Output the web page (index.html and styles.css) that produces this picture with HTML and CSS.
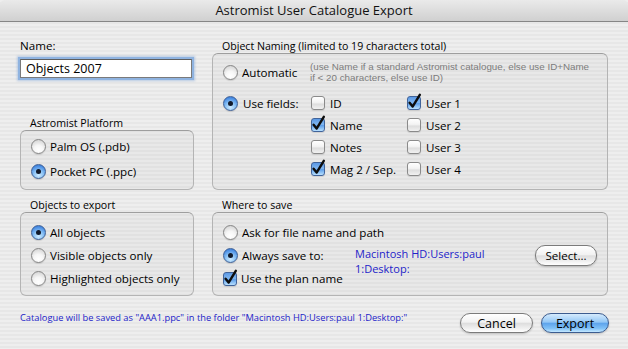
FILE: index.html
```html
<!DOCTYPE html>
<html lang="en">
<head>
    <meta charset="UTF-8">
    <title>Astromist User Catalogue Export</title>
    <link rel="stylesheet" href="styles.css">
</head>
<body>
    <div class="window">
        <div class="titlebar">Astromist User Catalogue Export</div>

        <div class="content">
            <div class="top-left">
                <div class="field-label">Name:</div>
                <input class="name-input" type="text" value="Objects 2007">

                <div class="group platform">
                    <div class="group-title">Astromist Platform</div>
                    <div class="group-box">
                        <div class="option"><span class="radio"></span>Palm OS (.pdb)</div>
                        <div class="option"><span class="radio on"></span>Pocket PC (.ppc)</div>
                    </div>
                </div>
            </div>

            <div class="group naming">
                <div class="group-title">Object Naming (limited to 19 characters total)</div>
                <div class="group-box">
                    <div class="auto-row">
                        <div class="option lead"><span class="radio"></span>Automatic</div>
                        <div class="note">
                            <div>(use Name if a standard Astromist catalogue, else use ID+Name</div>
                            <div>if &lt; 20 characters, else use ID)</div>
                        </div>
                    </div>
                    <div class="fields">
                        <div class="option"><span class="radio on"></span>Use fields:</div>
                        <div class="option"><span class="check"></span>ID</div>
                        <div class="option"><span class="check on"><svg width="14" height="14" viewBox="0 0 14 14"><path d="M2.6 6.8 L5.6 10.6 L12.8 -1.2"/></svg></span>User 1</div>

                        <div></div>
                        <div class="option"><span class="check on"><svg width="14" height="14" viewBox="0 0 14 14"><path d="M2.6 6.8 L5.6 10.6 L12.8 -1.2"/></svg></span>Name</div>
                        <div class="option"><span class="check"></span>User 2</div>

                        <div></div>
                        <div class="option"><span class="check"></span>Notes</div>
                        <div class="option"><span class="check"></span>User 3</div>

                        <div></div>
                        <div class="option"><span class="check on"><svg width="14" height="14" viewBox="0 0 14 14"><path d="M2.6 6.8 L5.6 10.6 L12.8 -1.2"/></svg></span>Mag 2 / Sep.</div>
                        <div class="option"><span class="check"></span>User 4</div>
                    </div>
                </div>
            </div>

            <div class="group objects">
                <div class="group-title">Objects to export</div>
                <div class="group-box">
                    <div class="option"><span class="radio on"></span>All objects</div>
                    <div class="option"><span class="radio"></span>Visible objects only</div>
                    <div class="option"><span class="radio"></span>Highlighted objects only</div>
                </div>
            </div>

            <div class="group where">
                <div class="group-title">Where to save</div>
                <div class="group-box">
                    <div class="option wide"><span class="radio"></span>Ask for file name and path</div>
                    <div class="option"><span class="radio on"></span>Always save to:</div>
                    <div class="path">Macintosh HD:Users:paul<br>1:Desktop:</div>
                    <button class="btn small">Select...</button>
                    <div class="option"><span class="check on"><svg width="14" height="14" viewBox="0 0 14 14"><path d="M2.6 6.8 L5.6 10.6 L12.8 -1.2"/></svg></span>Use the plan name</div>
                </div>
            </div>
        </div>

        <div class="footer">
            <div class="status">Catalogue will be saved as "AAA1.ppc" in the folder "Macintosh HD:Users:paul 1:Desktop:"</div>
            <div class="buttons">
                <button class="btn cancel">Cancel</button>
                <button class="btn default">Export</button>
            </div>
        </div>
    </div>
</body>
</html>
```

FILE: styles.css
```css
* {
    box-sizing: border-box;
}

body {
    margin: 0;
    width: 628px;
    height: 349px;
    overflow: hidden;
    font-family: "Open Sans", "DejaVu Sans", sans-serif;
    font-size: 11.6px;
    color: #000;
    background: #e8e8e8;
}

.window {
    height: 349px;
    background: repeating-linear-gradient(to bottom, #eeeeee 0, #eeeeee 2px, #e7e7e7 2px, #e7e7e7 4px);
}

.titlebar {
    height: 22px;
    line-height: 21px;
    text-align: center;
    font-size: 13px;
    color: #111;
    background: linear-gradient(#eaeaea, #d0d0d0);
    border-bottom: 1px solid #868686;
    border-radius: 5px 5px 0 0;
}

.content {
    display: grid;
    grid-template-columns: 174px 396px;
    column-gap: 18px;
    row-gap: 9px;
    align-items: end;
    padding: 16px 20px 0;
}

.field-label {
    line-height: 15px;
}

.name-input {
    display: block;
    width: 172px;
    height: 19px;
    margin-top: 6px;
    padding: 0 5px;
    font-family: inherit;
    font-size: 12.5px;
    color: #000;
    background: #fff;
    border: 1px solid #7a7a7a;
    border-top-color: #5e5e5e;
    border-radius: 0;
    outline: none;
    box-shadow: 0 0 0 2px #8fb3e0, 0 0 2px 3px rgba(120, 160, 215, 0.45);
}

.platform {
    margin-top: 39px;
}

.group-title {
    height: 13px;
    line-height: 13px;
    padding-left: 10px;
    font-size: 10.6px;
}

.group-box {
    border: 1px solid #b4b4b4;
    border-top-color: #9e9e9e;
    border-radius: 6px;
    background: rgba(0, 0, 0, 0.025);
    padding: 8px 10px 0;
}

.platform .group-box {
    height: 60px;
    padding-top: 4px;
    display: grid;
    grid-auto-rows: 23px;
    row-gap: 2px;
}

.naming .group-box {
    height: 137px;
    padding-top: 7px;
}

.objects .group-box {
    height: 84px;
    display: grid;
    grid-auto-rows: 23px;
}

.where .group-box {
    height: 84px;
    display: grid;
    grid-template-columns: 132px 1fr auto;
    grid-auto-rows: 23px;
    align-items: center;
}

.option {
    display: flex;
    align-items: center;
    gap: 4px;
    white-space: nowrap;
}

.option.wide {
    grid-column: 1 / 4;
}

.auto-row {
    display: flex;
    align-items: center;
    height: 22px;
}

.option.lead {
    width: 87px;
    flex: none;
}

.note {
    font-family: "Liberation Sans", sans-serif;
    font-size: 9.8px;
    line-height: 11.3px;
    color: #7c7c7c;
    white-space: nowrap;
}

.fields {
    margin-top: 9px;
    display: grid;
    grid-template-columns: 88px 96px 1fr;
    grid-auto-rows: 22px;
    align-items: center;
}

.fields .option {
    gap: 5px;
}

.path {
    grid-row: 2 / 4;
    grid-column: 2;
    align-self: start;
    padding-top: 3px;
    font-size: 11px;
    line-height: 14.5px;
    color: #2323c8;
}

.radio {
    flex: none;
    width: 15px;
    height: 15px;
    border-radius: 50%;
    border: 1px solid #858585;
    background: radial-gradient(circle at 50% 78%, #ffffff 0, #f6f6f6 40%, #d9d9d9 80%, #c4c4c4 100%);
    box-shadow: 0 1px 1px rgba(0, 0, 0, 0.12);
    position: relative;
}

.radio.on {
    border-color: #3d5f95;
    background: radial-gradient(circle at 50% 80%, #cdeaff 0, #8cc3f5 40%, #4a8ee4 75%, #2d6acb 100%);
}

.radio.on::after {
    content: "";
    position: absolute;
    left: 4px;
    top: 4px;
    width: 5px;
    height: 5px;
    border-radius: 50%;
    background: #111a2c;
}

.check {
    flex: none;
    width: 14px;
    height: 14px;
    border-radius: 3px;
    border: 1px solid #8a8a8a;
    background: linear-gradient(#ffffff, #f3f3f3 45%, #dedede 60%, #f1f1f1);
    box-shadow: 0 1px 1px rgba(0, 0, 0, 0.1);
    position: relative;
}

.check.on {
    border-color: #40639a;
    background: linear-gradient(#5b98e4, #7fb6f0 45%, #5d9ee9 55%, #b9e1ff);
}

.check svg {
    position: absolute;
    left: -1px;
    top: -1px;
    overflow: visible;
}

.check path {
    fill: none;
    stroke: #0d0d0d;
    stroke-width: 2.4;
    stroke-linejoin: round;
    stroke-linecap: round;
}

.btn {
    height: 20px;
    padding: 0;
    border-radius: 10px;
    border: 1px solid #7b7b7b;
    font-family: inherit;
    font-size: 12.5px;
    color: #000;
    background: linear-gradient(#ffffff 0%, #f2f2f2 45%, #dedede 52%, #f0f0f0 80%, #ffffff 100%);
    box-shadow: 0 1px 2px rgba(0, 0, 0, 0.2);
}

.btn.small {
    width: 62px;
    height: 21px;
    font-size: 11.6px;
}

.footer {
    display: flex;
    justify-content: space-between;
    align-items: flex-start;
    margin-top: 17px;
    padding: 0 19px 0 20px;
}

.status {
    margin-top: -1px;
    font-size: 9.3px;
    line-height: 12px;
    color: #2323c8;
}

.buttons {
    display: flex;
    gap: 8px;
}

.btn.cancel {
    width: 73px;
}

.btn.default {
    width: 68px;
    border-color: #3c5c8f;
    background: linear-gradient(#d5ebfd 0%, #93c7f6 45%, #5ea4ec 52%, #80c1f7 80%, #c4e8ff 100%);
}
```
